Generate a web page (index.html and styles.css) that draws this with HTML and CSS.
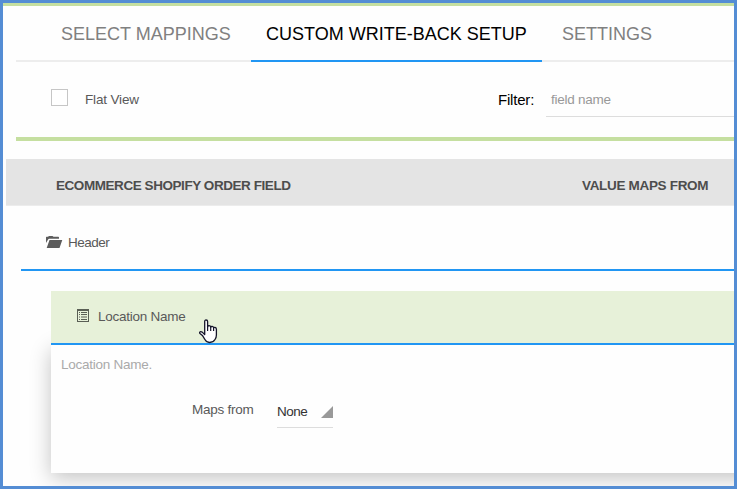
FILE: index.html
```html
<!DOCTYPE html>
<html lang="en">
<head>
<meta charset="utf-8">
<title>Custom Write-Back Setup</title>
<link rel="stylesheet" href="styles.css">
</head>
<body>
<main class="frame">
  <section class="top">
    <nav class="tabs">
      <a class="tab">SELECT MAPPINGS</a>
      <a class="tab active">CUSTOM WRITE-BACK SETUP</a>
      <a class="tab">SETTINGS</a>
    </nav>
    <div class="tools">
      <span class="checkbox"></span>
      <span class="flat">Flat View</span>
      <span class="filter-label">Filter:</span>
      <span class="filter-input">field name</span>
    </div>
  </section>
  <header class="table-head">
    <span class="col-field">ECOMMERCE SHOPIFY ORDER FIELD</span>
    <span class="col-value">VALUE MAPS FROM</span>
  </header>
  <div class="group">
    <svg class="folder" width="17" height="12" viewBox="0 0 17 12"><path fill="#5c5c5c" d="M0 7V1.2Q0 .8 .5 .8H2L3 0H6.5L7.5 .8H12.3Q13 .8 13 1.5V2.800H3.2Q2.4 2.800 2.1 3.500Z M3.5 3.900H16.3L13.5 12H.7Z"/></svg>
    <span>Header</span>
  </div>
  <section class="field">
    <div class="field-head">
      <svg class="list" width="12" height="13" viewBox="0 0 12 13"><path fill="#5a5f55" fill-rule="evenodd" d="M0 0H12V13H0Z M1 2V12H11V2Z M2 3H3V4H2Z M4 3H10V4H4Z M2 5H3V6H2Z M4 5H10V6H4Z M2 7.500H3V8.500H2Z M4 7.500H10V8.500H4Z M2 10H3V11H2Z M4 10H10V11H4Z"/></svg>
      <span class="field-name">Location Name</span>
      <svg class="pointer" width="20" height="25" viewBox="0 0 20 25"><path fill="#fff" stroke="#15152a" stroke-width="1.3" stroke-linejoin="round" d="M5.700 15.500V2.600Q5.700 1 7.100 1Q8.600 1 8.600 2.600V8Q8.700 6.700 10 6.700Q11.600 6.700 11.700 8.200Q12 7.200 13.200 7.300Q14.600 7.500 14.600 9Q15 8.200 16 8.400Q17.400 8.700 17.400 10.300V16Q17.400 18.500 16 20.500Q14.300 23.500 10.500 23.500Q7.600 23.500 5.900 20.500L3.700 16.800L1 14.500Q.2 13.500 1 12.900Q2 12.300 3.200 13.100Z"/><path fill="none" stroke="#15152a" stroke-width="1.2" d="M8.600 7V12M11.700 8V12M14.600 9V12"/></svg>
    </div>
    <div class="field-body">
      <p class="hint">Location Name.</p>
      <div class="mapping">
        <span class="map-label">Maps from</span>
        <span class="select"><span>None</span><svg width="12" height="12" viewBox="0 0 12 12"><path fill="#999" d="M12 0V12H0Z"/></svg></span>
      </div>
    </div>
  </section>
</main>
</body>
</html>
```
FILE: styles.css
```css
* { box-sizing: border-box; }
body { margin: 0; font: 13.5px/16px "Liberation Sans", Arial, sans-serif; letter-spacing: -.26px; color: #595959; background: #fff; }
.frame { width: 737px; height: 489px; border: 3px solid #548dd4; overflow: hidden; background: #fefefe; }
.top { border-top: 3px solid #c5dfa0; }
.tabs { display: flex; margin-left: 13px; height: 56px; padding-left: 30px; border-bottom: 2px solid #ededed; letter-spacing: 0; }
.tab { height: 56px; padding: 16px 15px 0; font-size: 18px; line-height: 24px; white-space: nowrap; color: #808080; }
.tab:first-child { width: 205px; }
.tab.active { width: 291px; color: #000; border-bottom: 2px solid #2196f3; }
.tab:last-child { padding-left: 20px; }
.tools { display: flex; height: 79px; margin-left: 13px; padding-left: 35px; border-bottom: 4px solid #c5dfa0; }
.checkbox { flex: none; width: 17px; height: 17px; margin-top: 27px; border: 1px solid #c6c6c6; background: #fff; }
.flat { width: 430px; padding: 30px 0 0 17px; letter-spacing: -.15px; }
.filter-label { width: 48px; padding-top: 30px; font-size: 15px; letter-spacing: -.2px; color: #000; }
.filter-input { flex: 1; height: 55px; padding: 30px 0 0 5px; color: #999; border-bottom: 1px solid #ddd; }
.table-head { display: flex; height: 47px; margin: 18px 0 0 3px; padding: 19px 0 0 50px; border-bottom: 1px solid #ececec; background: #e4e4e4; font-weight: bold; letter-spacing: -.44px; color: #4d4d4d; white-space: nowrap; }
.col-field { width: 526px; }
.col-value { letter-spacing: -.32px; }
.group { display: flex; height: 65px; margin-left: 18px; padding: 29px 0 0 25px; border-bottom: 2px solid #2196f3; letter-spacing: -.5px; }
.folder { margin: 1px 5px 0 0; }
.field { margin: 20px -40px 0 48px; }
.field-head { position: relative; z-index: 1; display: flex; height: 54px; padding: 17px 0 0 26px; border-bottom: 2px solid #2196f3; background: #e7f1d9; }
.list { margin: 1px 9px 0 0; }
.field-name { padding-top: 1px; }
.pointer { position: absolute; left: 148px; top: 28px; }
.field-body { height: 128px; padding: 12px 0 0 10px; background: #fefefe; box-shadow: 0 5px 20px rgba(0, 0, 0, .24); }
.hint { margin: 0; color: #aaa; }
.mapping { display: flex; margin-top: 29px; padding-left: 131px; }
.map-label { width: 85px; }
.select { display: flex; justify-content: space-between; width: 56px; height: 26px; padding-top: 2px; border-bottom: 1px solid #ddd; letter-spacing: -.5px; color: #333; }
.select svg { margin-top: 2px; }
```
